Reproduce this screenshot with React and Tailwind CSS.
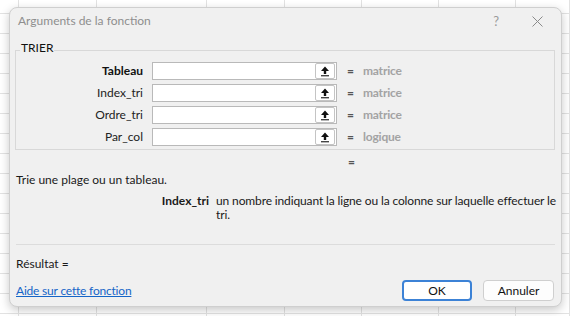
const gridCols = Array.from({ length: 8 });
const gridRows = Array.from({ length: 17 });

function UpIcon() {
  return (
    <svg width="10" height="11" viewBox="0 0 10 11">
      <polygon points="5,0.5 9,5 6.2,5 6.2,8 3.8,8 3.8,5 1,5" fill="#111" />
      <rect x="1" y="9" width="8" height="1.4" fill="#444" />
    </svg>
  );
}

export default function App() {
  const rows = [
    { label: 'Tableau', bold: true, val: 'matrice' },
    { label: 'Index_tri', val: 'matrice' },
    { label: 'Ordre_tri', val: 'matrice' },
    { label: 'Par_col', val: 'logique' },
  ];
  return (
    <div className="relative w-[570px] h-[316px] overflow-hidden bg-white font-['Lato',sans-serif] text-[12px] text-[#1a1a1a]">
      <div className="grid grid-cols-[19px_78px_110px_78px_77px_77px_77px_1fr] grid-rows-[14px_repeat(16,20px)]">
        {gridRows.map((_, r) =>
          gridCols.map((__, c) => (
            <div key={r + '-' + c} className="border-r border-b border-[#e2e2e2]" />
          ))
        )}
      </div>

      <div className="absolute left-[9px] top-[7px] w-[553px] h-[300px] rounded-[8px] bg-[#f0f0f0] border border-[#cfcfcf] shadow-[0_3px_10px_rgba(0,0,0,0.22)] flex flex-col">
        <div className="h-[26px] flex items-center pl-[8px] pr-[18px] shrink-0">
          <span className="text-[#8e8e8e] text-[12px] leading-[14px]">Arguments de la fonction</span>
          <span className="ml-auto text-[#9a9a9a] text-[13px] leading-[14px] mr-[33px]">?</span>
          <svg width="11" height="11" viewBox="0 0 11 11">
            <path d="M0.5 0.5 L10.5 10.5 M10.5 0.5 L0.5 10.5" stroke="#8a8a8a" strokeWidth="1" />
          </svg>
        </div>

        <fieldset className="mt-[7px] ml-[5px] mr-[6px] border border-[#d8d8d8] pb-[3px]">
          <legend className="ml-[4px] px-[1px] pb-[5px] leading-[14px] text-[12px] text-[#111]">TRIER</legend>
          <div className="flex flex-col gap-[4px] mt-[2px]">
            {rows.map((row) => (
              <div key={row.label} className="flex items-center h-[18px]">
                <div className={'w-[127px] text-right leading-[14px] ' + (row.bold ? 'font-bold text-[#111]' : 'text-[#222]')}>
                  {row.label}
                </div>
                <div className="ml-[9px] w-[185px] h-[18px] bg-white border border-[#b9b9b9] flex items-center justify-end pr-[1px]">
                  <div className="w-[20px] h-[16px] rounded-[2px] border border-[#c4c4c4] bg-white flex items-center justify-center">
                    <UpIcon />
                  </div>
                </div>
                <span className="ml-[10px] text-[#555] font-bold leading-[14px]">=</span>
                <span className="ml-[9px] text-[#a3a3a3] font-bold leading-[14px] tracking-[-0.2px]">{row.val}</span>
              </div>
            ))}
          </div>
        </fieldset>

        <div className="mt-[5px] pl-[338px] leading-[14px] text-[#555] font-bold">=</div>
        <div className="mt-[4px] pl-[6px] leading-[14px]">Trie une plage ou un tableau.</div>
        <div className="mt-[7px] flex">
          <div className="w-[199px] text-right font-bold leading-[14px] shrink-0">Index_tri</div>
          <div className="ml-[7px] leading-[14px] whitespace-nowrap tracking-[-0.13px]">
            un nombre indiquant la ligne ou la colonne sur laquelle effectuer le
            <br />
            tri.
          </div>
        </div>
        <div className="mt-[22px] ml-[6px] mr-[6px] h-px bg-[#dcdcdc]" />
        <div className="mt-[12px] pl-[6px] leading-[14px]">Résultat =</div>
        <div className="mt-[9px] flex items-center pl-[6px] pr-[7px]">
          <a className="text-[#1565c8] underline leading-[14px] mt-[1px] tracking-[-0.2px]">Aide sur cette fonction</a>
          <button className="ml-auto w-[70px] h-[21px] rounded-[4px] bg-white border-2 border-[#3c82d6] leading-[14px] flex items-center justify-center text-[#111]">
            OK
          </button>
          <button className="ml-[11px] w-[71px] h-[21px] rounded-[4px] bg-[#fdfdfd] border border-[#cfcfcf] leading-[14px] flex items-center justify-center text-[#111]">
            Annuler
          </button>
        </div>
      </div>
    </div>
  );
}
